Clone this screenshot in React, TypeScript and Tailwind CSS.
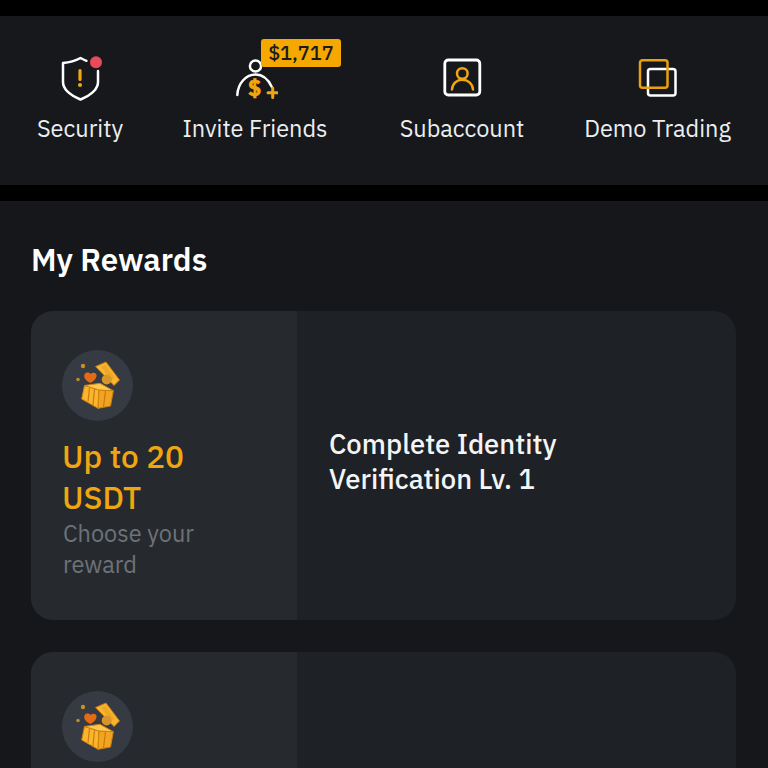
import React from 'react';

const SecurityIcon = () => (
  <svg width="44" height="50" viewBox="0 0 44 50" fill="none">
    <path d="M40 19 V30 C40 38 33 43 22.500 47.500 C12 43 5 38 5 30 V11 C11 10.500 17 9 22.500 6 C24.500 7 26.500 8 28.500 8.800" stroke="#fff" strokeWidth="2.500" strokeLinecap="round" strokeLinejoin="round" />
    <path d="M22 18.500 V27.500" stroke="#f0a70f" strokeWidth="3.200" strokeLinecap="round" />
    <circle cx="22" cy="33" r="2" fill="#f0a70f" />
    <circle cx="38" cy="10.300" r="6" fill="#e84a57" />
  </svg>
);

const InviteIcon = () => (
  <svg width="46" height="50" viewBox="0 0 46 50" fill="none">
    <circle cx="23.500" cy="14" r="5.600" stroke="#fff" strokeWidth="2.500" />
    <path d="M5.300 43 C6 31 14 22.500 23.700 22.500 C30.500 22.500 36 27 39.700 34.700" stroke="#fff" strokeWidth="2.500" strokeLinecap="round" />
    <text x="22.500" y="43.500" textAnchor="middle" fontSize="22" fontWeight="700" fill="#f0a70f" stroke="#f0a70f" strokeWidth="0.600" fontFamily="'IBM Plex Sans', sans-serif">$</text>
    <path d="M40.700 36 V45.500 M36 40.700 H45.500" stroke="#f0a70f" strokeWidth="3" strokeLinecap="round" />
  </svg>
);

const SubaccountIcon = () => (
  <svg width="40" height="40" viewBox="0 0 40 40" fill="none">
    <rect x="2.800" y="3" width="35" height="35" rx="3.500" stroke="#fff" strokeWidth="2.800" />
    <circle cx="20.300" cy="16.500" r="5.300" stroke="#f0a70f" strokeWidth="2.500" />
    <path d="M10 32.500 C10.500 26.500 14.800 22.800 20.300 22.800 C25.800 22.800 30.500 26.500 31 32.500" stroke="#f0a70f" strokeWidth="2.500" strokeLinecap="round" />
  </svg>
);

const DemoIcon = () => (
  <svg width="42" height="40" viewBox="0 0 42 40" fill="none">
    <rect x="11" y="11.900" width="27.500" height="26.500" rx="2.500" stroke="#fff" strokeWidth="2.500" />
    <rect x="3" y="3.200" width="27.500" height="27.500" rx="2.500" stroke="#e8a010" strokeWidth="2.500" />
  </svg>
);

const GiftIcon = () => (
  <svg width="71" height="71" viewBox="0 0 71 71" fill="none">
    <circle cx="21" cy="16" r="2.200" fill="#c98f22" />
    <circle cx="16" cy="29.500" r="1.800" fill="#b98a2c" />
    <path d="M28.500 33 C23 30.500 21.500 27 22.500 24.500 C23.500 22 27 22 28.500 24 C30.500 22 34 22.500 34.500 25 C35 28 32 31 28.500 33 Z" fill="#e56a16" />
    <path d="M33.500 16.500 L44 12 L57.500 30 L52 35.500 Z" fill="#f8b630" stroke="#c97a10" strokeWidth="1" />
    <path d="M39 16.500 L43.500 15 L53 28 L49 30 Z" fill="#eda826" />
    <circle cx="44.700" cy="29.500" r="5" fill="#d8952a" />
    <path d="M19.700 49 L22.500 35.500 L37 40 L36 58.300 Z" fill="#fbb52c" stroke="#cf8210" strokeWidth="1" />
    <path d="M37 40 L51.300 40.700 L48.500 56 L36 58.300 Z" fill="#f2a420" stroke="#cf8210" strokeWidth="1" />
    <path d="M22.500 35.500 L38 33.300 L51.300 40.700 L37 40 Z" fill="#fdc850" stroke="#cf8210" strokeWidth="1" />
    <path d="M27.500 38 L26 51.500 M32.500 39 L31 55 M43.500 40.500 L41.500 57" stroke="#c97a10" strokeWidth="1.200" />
  </svg>
);

const RewardBadge = () => (
  <div className="h-[71px] w-[71px] rounded-full bg-[#363b43]">
    <GiftIcon />
  </div>
);

const RewardCard = ({ children }: { children?: React.ReactNode }) => (
  <div className="flex h-[309px] w-[705px] shrink-0 overflow-hidden rounded-[22px] bg-[#1e2125]">
    <div className="w-[266px] shrink-0 bg-[#262a2f] pl-[31px] pt-[39px]">
      <RewardBadge />
      {children && (
        <>
          <div className="mt-[15px] w-[170px] text-[31.500px] font-medium leading-[41px] text-[#f0a70f]">Up to 20 USDT</div>
          <div className="w-[170px] pl-px text-[23.500px] leading-[31px] text-[#6d727a]">Choose your reward</div>
        </>
      )}
    </div>
    {children && (
      <div className="pl-[32px] pt-[116px] text-[27.400px] font-medium leading-[35px] text-[#f3f4f6]">{children}</div>
    )}
  </div>
);

const Shortcut = ({ label, icon, className }: { label: string; icon: React.ReactNode; className: string }) => (
  <div className={`flex flex-col items-center ${className}`}>
    <div className="flex h-[50px] items-center justify-center">{icon}</div>
    <div className="mt-[9px] whitespace-nowrap text-[23.500px] leading-[34px] text-[#eceef0]">{label}</div>
  </div>
);

export default function App() {
  return (
    <div className="flex h-[768px] w-[768px] flex-col overflow-hidden bg-black pt-[16px] font-['IBM_Plex_Sans','Noto_Sans',sans-serif]">
      <div className="flex h-[169px] shrink-0 items-start bg-[#16181c] pl-[37px] pt-[36px]">
        <Shortcut label="Security" icon={<SecurityIcon />} className="w-[86px]" />
        <div className="relative ml-[60px] w-[144px]">
          <Shortcut label="Invite Friends" icon={<InviteIcon />} className="w-[144px]" />
          <div className="absolute left-[78px] top-[-13px] flex h-[28px] w-[80px] items-center justify-center rounded-[3px] bg-[#f6a800] text-[20px] font-medium text-[#1a1c20]">
            $1,717
          </div>
        </div>
        <Shortcut label="Subaccount" icon={<SubaccountIcon />} className="ml-[73px] w-[124px]" />
        <Shortcut label="Demo Trading" icon={<DemoIcon />} className="ml-[60px] w-[147px]" />
      </div>
      <div className="mt-[16px] flex flex-1 flex-col items-start bg-[#15171b] pl-[31px]">
        <h2 className="mt-[38px] text-[31.300px] font-semibold leading-[42px] text-white">My Rewards</h2>
        <div className="mt-[30px] flex flex-col gap-[32px]">
          <RewardCard>
            Complete Identity<br />Verification Lv. 1
          </RewardCard>
          <RewardCard />
        </div>
      </div>
    </div>
  );
}
